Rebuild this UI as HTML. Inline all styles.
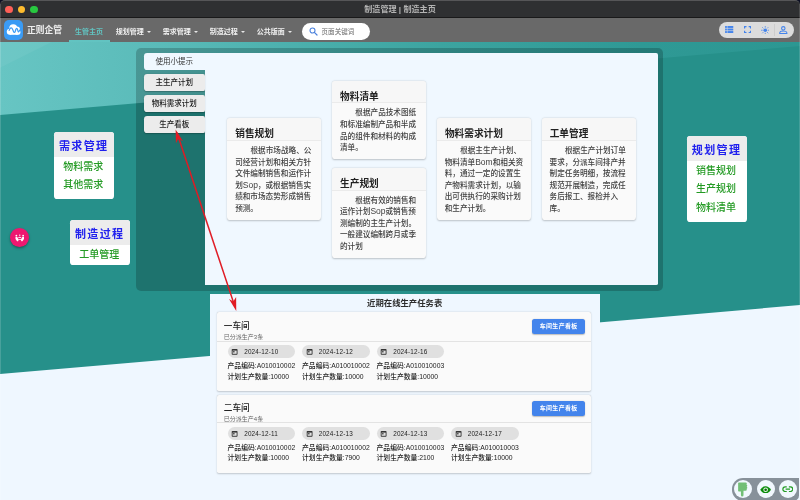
<!DOCTYPE html>
<html lang="zh-CN">
<head>
<meta charset="utf-8">
<title>制造管理 | 制造主页</title>
<style>
*{box-sizing:border-box;margin:0;padding:0}
html,body{width:800px;height:500px;overflow:hidden;background:#eff7ff}
body{font-family:"Liberation Sans","Noto Sans CJK SC",sans-serif;color:#333}
#root{will-change:transform;position:absolute;left:0;top:0;width:1280px;height:800px;zoom:.625;overflow:hidden;background:#26908a}
.abs{position:absolute}
/* title bar */
#titlebar{position:absolute;left:0;top:0;width:1280px;height:28.5px;background:#2f3032;border-top:1.6px solid #565658;border-bottom:2px solid #19191a;border-radius:8px 8px 0 0}
#tbback{position:absolute;left:0;top:0;width:1280px;height:14px;background:#0c0f22}
#titlebar .dot{position:absolute;top:7.4px;width:12.4px;height:12.4px;border-radius:50%}
#titlebar .ttl{position:absolute;left:0;right:0;top:4.6px;text-align:center;font-size:13px;font-weight:700;color:#b4b4b4;line-height:18px}
/* header */
#header{position:absolute;left:0;top:28.5px;width:1280px;height:38.6px;background:#696969}
#logo{position:absolute;left:6.3px;top:3.8px;width:31px;height:31px;border-radius:8px;background:#3a9bf5}
#brand{position:absolute;left:43.2px;top:9.5px;font-size:14px;font-weight:700;color:#eee;line-height:20px;white-space:nowrap}
.nav{position:absolute;top:12.5px;font-size:11.25px;font-weight:700;color:#f0f0f0;line-height:18px;white-space:nowrap}
.nav.act{color:#62c3c1}
.nav i{display:inline-block;width:0;height:0;border-left:3.2px solid transparent;border-right:3.2px solid transparent;border-top:3.4px solid #e8e8e8;margin-left:4.6px;vertical-align:1.6px}
#underline{position:absolute;left:110.9px;top:36.2px;width:64.8px;height:2.4px;background:#62c3c1}
#search{position:absolute;left:483px;top:8.4px;width:109px;height:27.2px;border-radius:14px;background:#fff}
#search span{position:absolute;left:31.5px;top:5px;font-size:10.5px;color:#666;line-height:18px;white-space:nowrap}
#tools{position:absolute;left:1149.6px;top:6.4px;width:120px;height:26.4px;border-radius:14px;background:#dcdcdc}
/* background */
#bg{position:absolute;left:0;top:67.1px;width:1280px;height:733px}
/* panel */
#panel{position:absolute;left:218.2px;top:76.4px;width:842.6px;height:388.6px;border-radius:8px;background:rgba(0,0,0,.2)}
#content{position:absolute;left:327.6px;top:84.4px;width:725.2px;height:372px;background:#f0f8ff;border-radius:0 3px 3px 0}
.tab{position:absolute;left:230px;width:97.6px;height:27.4px;border-radius:5px 3px 3px 5px;background:#ececec;font-size:12px;font-weight:500;line-height:29.8px;text-align:center;color:#1a1a1a;white-space:nowrap;box-shadow:0 1px 2px rgba(0,0,0,.25)}
.tab.on{background:#f0f8ff;color:#333;font-weight:400;box-shadow:none;border-radius:5px 0 0 5px;line-height:29.2px}
/* info cards */
.card{position:absolute;width:150px;background:#fafafa;border-radius:5px;box-shadow:0 1.5px 3px rgba(0,0,0,.22),0 0 1px rgba(0,0,0,.12)}
.card h3{height:36.2px;padding:14.2px 12.6px 0;font-size:15.5px;line-height:22px;font-weight:700;color:#222;border-bottom:1px solid #ebebeb;background:#f7f7f7;border-radius:5px 5px 0 0;white-space:nowrap}
.card p{padding:6.4px 12.4px 8.4px;font-size:12.2px;font-weight:500;line-height:18.6px;color:#414141;text-indent:24.6px;white-space:nowrap}
.en{font-size:13.6px;line-height:1;font-weight:400}
/* side menus */
.menu{position:absolute;width:96.4px;background:#fff;border-radius:5px;overflow:hidden;text-align:center}
.menu b{display:block;height:39.4px;background:#ececec;font-size:17.6px;letter-spacing:2.2px;line-height:45.4px;color:#2020ee;font-weight:700;white-space:nowrap;padding-right:1.5px}
.menu span{display:block;height:29.5px;font-size:16px;line-height:31.2px;color:#239a23;font-weight:500;white-space:nowrap;padding-right:3px}
/* fab */
#fab{position:absolute;left:15.9px;top:365.4px;width:30.2px;height:30.2px;border-radius:50%;background:#ee1870;box-shadow:0 2px 4px rgba(0,0,0,.35)}
/* bottom section */
#section{position:absolute;left:335.4px;top:470.2px;width:624.2px;height:330px;background:#eff7ff}
#section h2{position:absolute;left:0;right:0;top:4.2px;text-align:center;font-size:13.4px;line-height:20px;font-weight:700;color:#2c2c2c}
.shop{position:absolute;left:11.4px;width:598.4px;height:125px;background:#fafafa;border-radius:3px;box-shadow:0 1.5px 3px rgba(0,0,0,.2),0 0 1px rgba(0,0,0,.12)}
.shop .t{position:absolute;left:11.3px;top:12.6px;font-size:13.8px;line-height:20px;font-weight:500;color:#222;white-space:nowrap}
.shop .s{position:absolute;left:11.3px;top:33.4px;font-size:9.6px;line-height:14px;color:#666;white-space:nowrap}
.shop .hr{position:absolute;left:0;right:0;top:45.7px;height:1px;background:#e3e3e3}
.shop .btn{position:absolute;left:505px;top:10.8px;width:83.5px;height:24.9px;border-radius:4px;background:#4384ec;color:#fff;font-size:9.5px;font-weight:700;line-height:25.2px;text-align:center;letter-spacing:.65px;padding-left:.6px;white-space:nowrap;box-shadow:0 1px 2px rgba(0,0,0,.25)}
.job{position:absolute;top:52.6px;width:108px;margin-left:.8px}
.job .chip{position:relative;height:21.6px;border-radius:10.8px;background:#e0e0e0;font-size:10.2px;letter-spacing:.28px;line-height:21.5px;color:#222;padding-left:26.6px;white-space:nowrap}
.job .chip svg{position:absolute;left:6.2px;top:5.2px;width:11.6px;height:11.6px}
.job .l{font-weight:500;font-size:10.9px;line-height:17.2px;color:#222;white-space:nowrap}
.job .l1{margin-top:4.1px}
/* corner widget */
#corner{position:absolute;left:1171px;top:765.2px;width:107.2px;height:36px;border-radius:17.6px 0 9px 17.6px;background:#87919a}
#corner .c{position:absolute;top:3.1px;width:29.2px;height:29.2px;border-radius:50%;background:#f1f8fe}
</style>
</head>
<body>
<div id="root">

<!-- background layers -->
<svg id="bg" viewBox="0 0 1280 733">
  <defs>
    <linearGradient id="g1" x1="0" y1="0" x2="1" y2="0">
      <stop offset="0" stop-color="#67c5c3"/>
      <stop offset="0.2" stop-color="#5abbb9"/>
      <stop offset="0.55" stop-color="#3ca4a0"/>
      <stop offset="0.8" stop-color="#2f9995"/>
      <stop offset="1" stop-color="#2c9792"/>
    </linearGradient>
  </defs>
  <rect x="0" y="0" width="1280" height="733" fill="#26908a"/>
  <polygon points="0,0 1280,0 1280,6.5 0,116.9" fill="url(#g1)"/>
  <polygon points="0,0 83,0 0,41" fill="#ffffff" fill-opacity="0.05"/>
  <polygon points="0,531.3 1280,420.9 1280,733 0,733" fill="#eff7ff"/>
</svg>

<!-- title bar -->
<div id="tbback"></div>
<div id="titlebar">
  <div class="dot" style="left:8.2px;background:#fe5f57"></div>
  <div class="dot" style="left:28.2px;background:#febc2e"></div>
  <div class="dot" style="left:48.2px;background:#28c840"></div>
  <div class="ttl">制造管理 | 制造主页</div>
</div>

<!-- header -->
<div id="header">
  <div id="logo">
    <svg viewBox="0 0 31 31" width="31" height="31">
      <g fill="#fff"><circle cx="9.200" cy="18.800" r="4.800"/><circle cx="14.800" cy="13.300" r="6.400"/><circle cx="20.600" cy="15.400" r="5"/><circle cx="22" cy="19.400" r="4.300"/><rect x="9.200" y="17" width="12.800" height="6.700"/></g>
      <path d="M8.300 16.600C9.800 12 12.300 11.400 13.800 15l1.400 3.300c.8 1.900 2 1.900 2.700 0l1-3c.8-2.500 2.100-2.500 2.800 0l.7 2.400c.6 1.900 1.700 1.500 2.600-1.600" fill="none" stroke="#3a9bf5" stroke-width="2" stroke-linecap="round" stroke-linejoin="round"/>
    </svg>
  </div>
  <div id="brand">正则企管</div>
  <div class="nav act" style="left:120px">生管主页</div>
  <div class="nav" style="left:185.3px">规划管理<i></i></div>
  <div class="nav" style="left:260.4px">需求管理<i></i></div>
  <div class="nav" style="left:335.5px">制造过程<i></i></div>
  <div class="nav" style="left:410.9px">公共版面<i></i></div>
  <div id="underline"></div>
  <div id="search">
    <svg class="abs" style="left:11.5px;top:6.6px" width="14" height="14" viewBox="0 0 14 14"><circle cx="5.6" cy="5.6" r="4" fill="none" stroke="#4a80dc" stroke-width="1.7"/><path d="M8.6 8.6L12.8 12.8" stroke="#4a80dc" stroke-width="1.9" stroke-linecap="round"/></svg>
    <span>页面关键词</span>
  </div>
  <div id="tools">
    <svg class="abs" style="left:10.600px;top:7.400px" width="13.400" height="11.200" viewBox="0 0 14 12" fill="#4384ec"><rect x="0" y="0" width="3" height="3.300"/><rect x="4" y="0" width="10" height="3.300"/><rect x="0" y="4.350" width="3" height="3.300"/><rect x="4" y="4.350" width="10" height="3.300"/><rect x="0" y="8.700" width="3" height="3.300"/><rect x="4" y="8.700" width="10" height="3.300"/></svg>
    <svg class="abs" style="left:40.800px;top:7.200px" width="11.400" height="11.400" viewBox="0 0 12 12" fill="none" stroke="#4384ec" stroke-width="2"><path d="M1 4.200V1h3.200M7.800 1H11v3.200M11 7.800V11H7.800M4.200 11H1V7.800"/></svg>
    <svg class="abs" style="left:67.800px;top:6.200px" width="13.600" height="13.600" viewBox="0 0 16 16"><circle cx="8" cy="8" r="3.400" fill="#4384ec"/><g stroke="#4384ec" stroke-width="1.400" stroke-linecap="round"><path d="M8 .8v1.600M8 13.600v1.600M.8 8h1.600M13.600 8h1.600M2.900 2.900l1.100 1.100M12 12l1.100 1.100M2.900 13.100l1.100-1.100M12 4l1.100-1.100"/></g></svg>
    <div class="abs" style="left:89.300px;top:3px;width:1px;height:20.400px;background:#cdcdcd"></div>
    <svg class="abs" style="left:96.600px;top:6.200px" width="13.800" height="13.200" viewBox="0 0 14 13.400" fill="none" stroke="#4384ec" stroke-width="1.700"><circle cx="7" cy="3.800" r="2.800"/><path d="M1.200 12.400v-1c0-2.200 3.800-3.200 5.800-3.200s5.800 1 5.800 3.200v1z" stroke-linejoin="round"/></svg>
  </div>
</div>

<!-- panel -->
<div id="panel"></div>
<div id="content"></div>
<div class="tab on" style="top:84.600px">使用小提示</div>
<div class="tab" style="top:118.300px">主生产计划</div>
<div class="tab" style="top:151.900px">物料需求计划</div>
<div class="tab" style="top:185.500px">生产看板</div>

<!-- info cards -->
<div class="card" style="left:363.8px;top:189.2px"><h3>销售规划</h3><p>根据市场战略、公<br>司经营计划和相关方针<br>文件编制销售和运作计<br>划<span class="en">Sop</span>，或根据销售实<br>绩和市场态势形成销售<br>预测。</p></div>
<div class="card" style="left:531.5px;top:129px"><h3>物料清单</h3><p>根据产品技术图纸<br>和标准编制产品和半成<br>品的组件和材料的构成<br>清单。</p></div>
<div class="card" style="left:531.5px;top:268.6px"><h3>生产规划</h3><p>根据有效的销售和<br>运作计划<span class="en">Sop</span>或销售预<br>测编制的主生产计划。<br>一般建议编制跨月或季<br>的计划</p></div>
<div class="card" style="left:699.2px;top:189.2px"><h3>物料需求计划</h3><p>根据主生产计划、<br>物料清单<span class="en">Bom</span>和相关资<br>料，通过一定的设置生<br>产物料需求计划，以输<br>出可供执行的采购计划<br>和生产计划。</p></div>
<div class="card" style="left:866.9px;top:189.2px"><h3>工单管理</h3><p>根据生产计划订单<br>要求，分派车间排产并<br>制定任务明细，按流程<br>规范开展制造，完成任<br>务后报工、报检并入<br>库。</p></div>

<!-- side menus -->
<div class="menu" style="left:86.400px;top:211.500px;height:107px"><b>需求管理</b><span>物料需求</span><span>其他需求</span></div>
<div class="menu" style="left:112px;top:352.600px;height:71.400px"><b>制造过程</b><span>工单管理</span></div>
<div class="menu" style="left:1099px;top:217.600px;height:138px"><b>规划管理</b><span>销售规划</span><span>生产规划</span><span>物料清单</span></div>

<!-- fab -->
<div id="fab">
  <svg class="abs" style="left:7.5px;top:9.2px" width="15.2" height="12" viewBox="0 0 16 12" fill="#fff"><circle cx="2.3" cy="2.5" r="1.5"/><circle cx="13.7" cy="2.5" r="1.5"/><circle cx="8" cy="1.6" r="1.2"/><path d="M.8 4.600h3l2.400 4.600-1 2.600H3.600L.8 8z"/><path d="M15.200 4.600h-3l-2.400 4.600 1 2.600h1.600L15.200 8z"/><path d="M5.400 5.600Q8 3 10.600 5.600V7Q8 4.800 5.400 7z"/><path d="M5.800 8.400h4.400v1.300H5.800z"/></svg>
</div>

<!-- bottom section -->
<div id="section">
  <h2>近期在线生产任务表</h2>
  <div class="shop" style="top:29px;height:126px">
    <div class="t">一车间</div><div class="s">已分派生产3条</div><div class="btn">车间生产看板</div><div class="hr"></div>
    <div class="job" style="left:16.500px"><div class="chip"><svg viewBox="0 0 10 10"><rect x="1" y="1.400" width="8" height="7.800" rx="1" fill="#333"/><rect x="2.200" y="3.600" width="5.600" height="4.400" fill="#e0e0e0"/><rect x="2.900" y="4.300" width="2" height="1.800" fill="#333"/></svg>2024-12-10</div><div class="l l1">产品编码:A010010002</div><div class="l">计划生产数量:10000</div></div>
    <div class="job" style="left:135.700px"><div class="chip"><svg viewBox="0 0 10 10"><rect x="1" y="1.400" width="8" height="7.800" rx="1" fill="#333"/><rect x="2.200" y="3.600" width="5.600" height="4.400" fill="#e0e0e0"/><rect x="2.900" y="4.300" width="2" height="1.800" fill="#333"/></svg>2024-12-12</div><div class="l l1">产品编码:A010010002</div><div class="l">计划生产数量:10000</div></div>
    <div class="job" style="left:254.900px"><div class="chip"><svg viewBox="0 0 10 10"><rect x="1" y="1.400" width="8" height="7.800" rx="1" fill="#333"/><rect x="2.200" y="3.600" width="5.600" height="4.400" fill="#e0e0e0"/><rect x="2.900" y="4.300" width="2" height="1.800" fill="#333"/></svg>2024-12-16</div><div class="l l1">产品编码:A010010003</div><div class="l">计划生产数量:10000</div></div>
  </div>
  <div class="shop" style="top:162.2px;height:124.8px"><div class="abs" style="left:0;top:-2.4px;width:100%;height:100%">
    <div class="t">二车间</div><div class="s">已分派生产4条</div><div class="btn">车间生产看板</div><div class="hr"></div>
    <div class="job" style="left:16.500px"><div class="chip"><svg viewBox="0 0 10 10"><rect x="1" y="1.400" width="8" height="7.800" rx="1" fill="#333"/><rect x="2.200" y="3.600" width="5.600" height="4.400" fill="#e0e0e0"/><rect x="2.900" y="4.300" width="2" height="1.800" fill="#333"/></svg>2024-12-11</div><div class="l l1">产品编码:A010010002</div><div class="l">计划生产数量:10000</div></div>
    <div class="job" style="left:135.700px"><div class="chip"><svg viewBox="0 0 10 10"><rect x="1" y="1.400" width="8" height="7.800" rx="1" fill="#333"/><rect x="2.200" y="3.600" width="5.600" height="4.400" fill="#e0e0e0"/><rect x="2.900" y="4.300" width="2" height="1.800" fill="#333"/></svg>2024-12-13</div><div class="l l1">产品编码:A010010002</div><div class="l">计划生产数量:7900</div></div>
    <div class="job" style="left:254.900px"><div class="chip"><svg viewBox="0 0 10 10"><rect x="1" y="1.400" width="8" height="7.800" rx="1" fill="#333"/><rect x="2.200" y="3.600" width="5.600" height="4.400" fill="#e0e0e0"/><rect x="2.900" y="4.300" width="2" height="1.800" fill="#333"/></svg>2024-12-13</div><div class="l l1">产品编码:A010010003</div><div class="l">计划生产数量:2100</div></div>
    <div class="job" style="left:374.100px"><div class="chip"><svg viewBox="0 0 10 10"><rect x="1" y="1.400" width="8" height="7.800" rx="1" fill="#333"/><rect x="2.200" y="3.600" width="5.600" height="4.400" fill="#e0e0e0"/><rect x="2.900" y="4.300" width="2" height="1.800" fill="#333"/></svg>2024-12-17</div><div class="l l1">产品编码:A010010003</div><div class="l">计划生产数量:10000</div></div>
  </div></div>
</div>

<!-- red arrow -->
<svg class="abs" style="left:0;top:0" width="1280" height="800" viewBox="0 0 1280 800">
  <g stroke="#e01b24" fill="#e01b24">
    <path d="M283 212L376 491" stroke-width="2.4" fill="none"/>
    <polygon points="281,207 281.500,229 285,222.500 292.500,225.500" stroke="none"/>
    <polygon points="378,497.600 366.400,478.400 373.200,482.200 377.800,475" stroke="none"/>
  </g>
</svg>

<div class="abs" style="left:0;top:6px;width:1.4px;height:794px;background:rgba(255,255,255,.16)"></div>
<div class="abs" style="left:1278.6px;top:6px;width:1.4px;height:794px;background:rgba(255,255,255,.14)"></div>

<!-- corner widget -->
<div id="corner">
  <div class="c" style="left:3.2px"><svg class="abs" style="left:4.4px;top:2.8px" width="20" height="24" viewBox="0 0 20 24"><path d="M1.800 1.800Q1.800 .6 3 .6h10.500q2.200 0 2.200 1.900 0 .9-.7 1.300 1.400 .5 1.400 1.900 0 1.200-1 1.700 1.100 .5 1.100 1.800 0 1.400-1.400 1.900 .6 .4 .6 1.200 0 1.700-2.200 1.700H10.400v6.600q0 2.400-2.100 2.400-2 0-2-2.400V15.200H3q-1.200 0-1.200-1.200z" fill="#72bf76"/></svg></div>
  <div class="c" style="left:39.400px"><svg class="abs" style="left:5.600px;top:8.700px" width="18" height="12" viewBox="0 0 18 12"><path d="M.3 6Q4 .2 9 .2T17.700 6Q14 11.800 9 11.800T.3 6z" fill="#0b8d0b"/><circle cx="9" cy="6" r="3.700" fill="#e9f6ea"/><circle cx="9" cy="6" r="2.100" fill="#0a6a0a"/></svg></div>
  <div class="c" style="left:74.700px"><svg class="abs" style="left:5.200px;top:9.600px" width="18.600" height="10" viewBox="0 0 18.600 10" fill="none" stroke="#259c25" stroke-width="2"><path d="M7.600 1.200H5.200a3.800 3.800 0 0 0 0 7.600h2.400M11 1.200h2.400a3.800 3.800 0 0 1 0 7.600H11M5.800 5h7"/></svg></div>
</div>
</body>
</html>
